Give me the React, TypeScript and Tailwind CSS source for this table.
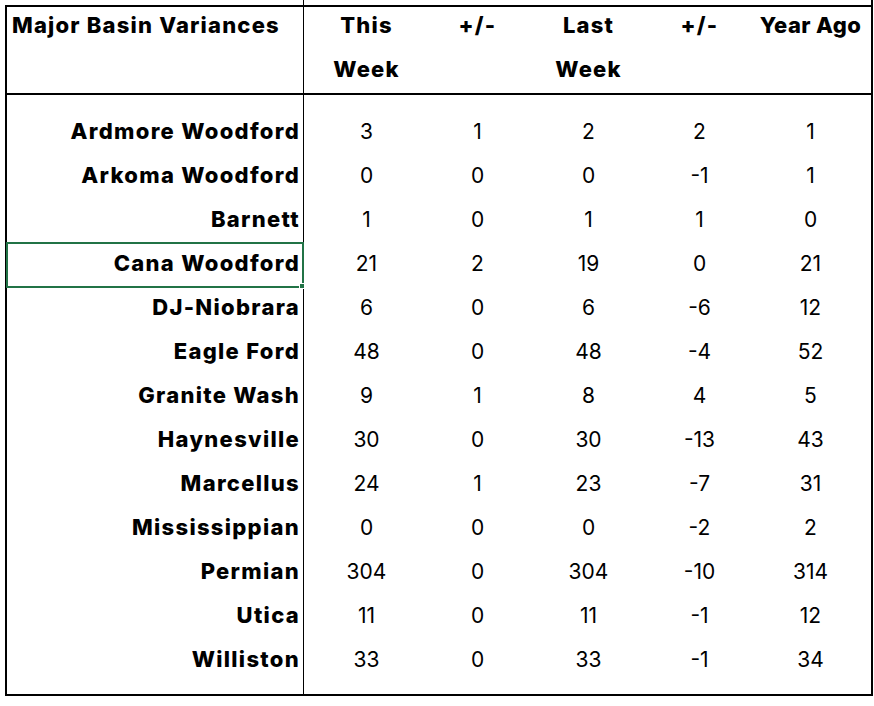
import React from 'react';

const rows: [string, string, string, string, string, string][] = [
    ['Ardmore Woodford', '3', '1', '2', '2', '1'],
    ['Arkoma Woodford', '0', '0', '0', '-1', '1'],
    ['Barnett', '1', '0', '1', '1', '0'],
    ['Cana Woodford', '21', '2', '19', '0', '21'],
    ['DJ-Niobrara', '6', '0', '6', '-6', '12'],
    ['Eagle Ford', '48', '0', '48', '-4', '52'],
    ['Granite Wash', '9', '1', '8', '4', '5'],
    ['Haynesville', '30', '0', '30', '-13', '43'],
    ['Marcellus', '24', '1', '23', '-7', '31'],
    ['Mississippian', '0', '0', '0', '-2', '2'],
    ['Permian', '304', '0', '304', '-10', '314'],
    ['Utica', '11', '0', '11', '-1', '12'],
    ['Williston', '33', '0', '33', '-1', '34'],
];

const App: React.FC = () => {
    return (
        <div className="w-[874px] h-[706px] bg-white pl-[5px] text-black text-[21px]" style={{ fontFamily: 'Inter, "Liberation Sans", sans-serif' }}>
            {/* strip above the table: column lines continue upward */}
            <div className="flex h-[5px] w-[868px]">
                <div className="w-[298px]" />
                <div className="w-px bg-black" />
                <div className="flex-1" />
                <div className="w-[2px] bg-black" />
            </div>

            <div className="w-[868px] h-[691px] border-2 border-black flex flex-col">
                {/* Header */}
                <div className="flex h-[88px] border-b-2 border-black font-extrabold text-[22px] tracking-[1.2px] leading-[44px]">
                    <div className="w-[297px] border-r border-black pl-[5px] -mt-[4px] whitespace-nowrap">Major Basin Variances</div>
                    <div className="grid grid-cols-[repeat(5,111px)] pl-[7px] text-center -mt-[4px]">
                        <div>This<br />Week</div>
                        <div>+/-</div>
                        <div>Last<br />Week</div>
                        <div>+/-</div>
                        <div className="whitespace-nowrap tracking-[0.4px]">Year Ago</div>
                    </div>
                </div>

                {/* Body */}
                <div className="flex flex-1">
                    <div className="w-[297px] border-r border-black pt-[16px] font-extrabold text-[22px] tracking-[1.3px]">
                        {rows.map((r) => (
                            <div key={r[0]} className="relative h-[44px] leading-[40px] text-right pr-[3px]">
                                {r[0]}
                                {r[0] === 'Cana Woodford' && (
                                    <div className="absolute -left-[1px] -top-[1px] w-[298px] h-[46px] border-2 border-[#217346]">
                                        <div className="absolute -right-[3px] -bottom-[3px] w-[6px] h-[6px] bg-[#217346] border border-white" />
                                    </div>
                                )}
                            </div>
                        ))}
                    </div>
                    <div className="grid grid-cols-[repeat(5,111px)] auto-rows-[44px] content-start pl-[7px] pt-[16px] text-center leading-[42px]">
                        {rows.map((r) =>
                            r.slice(1).map((v, i) => <div key={r[0] + i}>{v}</div>)
                        )}
                    </div>
                </div>
            </div>
        </div>
    );
};

export default App;
